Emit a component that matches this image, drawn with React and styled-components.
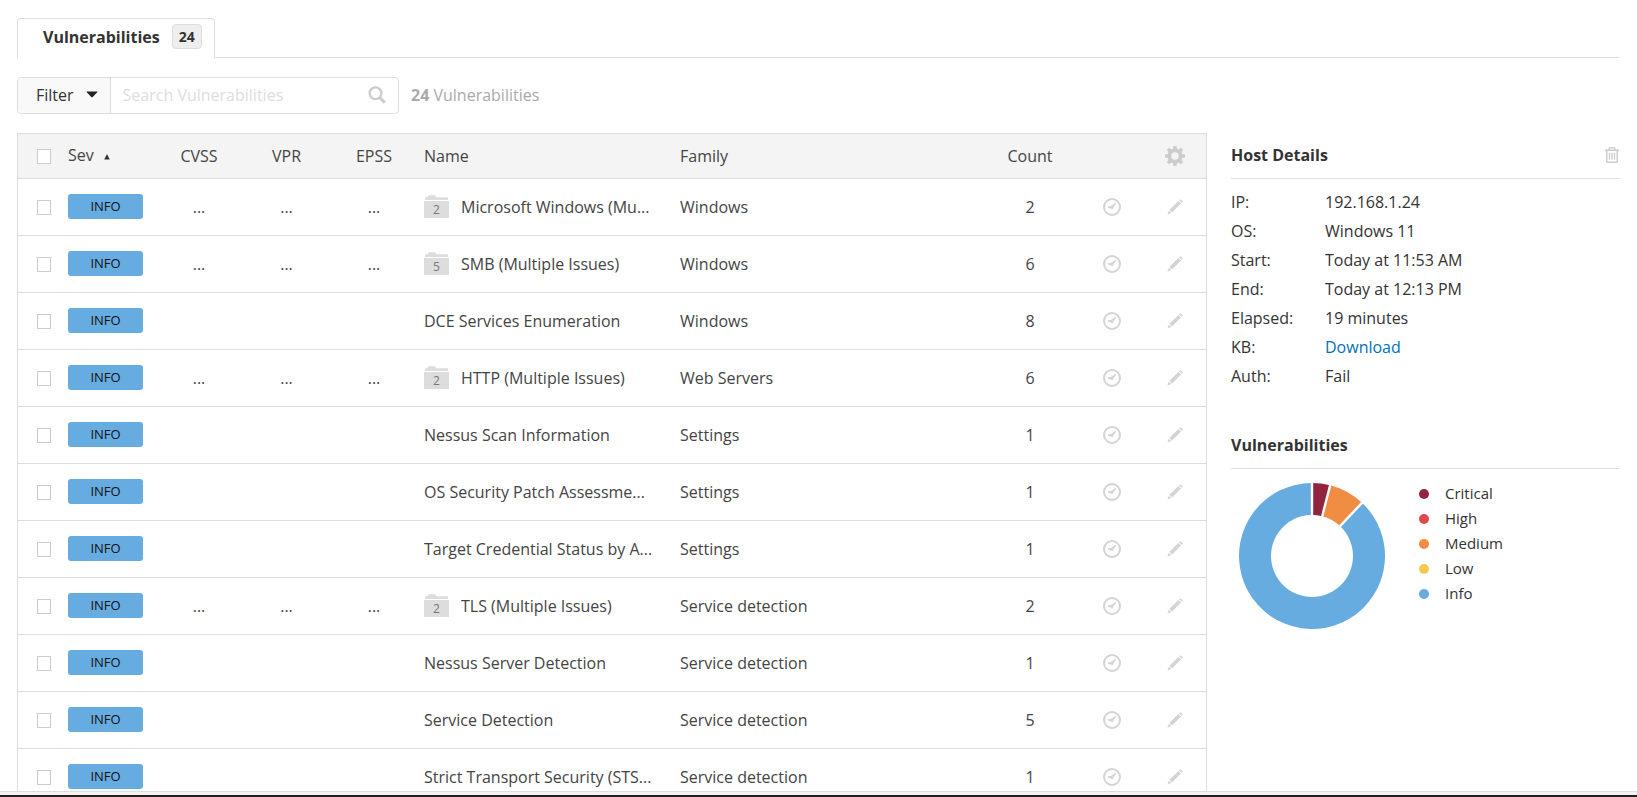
import React from "react";
import styled, { createGlobalStyle } from "styled-components";

const GlobalStyle = createGlobalStyle`
  * { box-sizing: border-box; }
  body {
    margin: 0;
    background: #fff;
    color: #333;
    font: 16px/24px "Open Sans", "Noto Sans", sans-serif;
  }
  button, input { font: inherit; color: inherit; }
`;

const Page = styled.div`
  display: flex;
  flex-direction: column;
  height: 100vh;
`;

const Content = styled.main`
  flex: 1;
  min-height: 0;
  overflow: hidden;
  padding: 18px 18px 0 17px;
`;

const Footer = styled.footer`
  flex: none;
  height: 6px;
  background: #f4f4f4;
  border-top: 1px solid #ddd;
  border-bottom: 2px solid #231f20;
`;

const Tabs = styled.nav`
  display: flex;
  border-bottom: 1px solid #ddd;
`;

const Tab = styled.a`
  display: flex;
  align-items: center;
  gap: 12px;
  height: 40px;
  margin-bottom: -1px;
  padding: 0 12px 4px 25px;
  border: 1px solid #ddd;
  border-bottom: 0;
  border-radius: 4px 4px 0 0;
  background: #fff;
  color: #333;
  font-weight: 700;
  text-decoration: none;
`;

const TabCount = styled.span`
  padding: 0 6px;
  border: 1px solid #ddd;
  border-radius: 4px;
  background: #eee;
  font-size: 14px;
  line-height: 23px;
`;

const Toolbar = styled.div`
  display: flex;
  align-items: center;
  gap: 12px;
  margin: 19px 0;
`;

const SearchGroup = styled.div`
  display: flex;
  align-items: center;
  width: 382px;
  height: 37px;
  border: 1px solid #ddd;
  border-radius: 4px;
  overflow: hidden;
`;

const FilterButton = styled.button`
  display: flex;
  align-items: center;
  gap: 12px;
  height: 100%;
  padding: 0 12px 2px 18px;
  border: 0;
  border-right: 1px solid #ddd;
  background: #f9f9f9;
`;

const SearchInput = styled.input`
  flex: 1;
  min-width: 0;
  height: 100%;
  padding: 0 12px 2px;
  border: 0;
  outline: 0;
  background: #fff;
  &::placeholder { color: #ddd; opacity: 1; }
`;

const IconButton = styled.button`
  display: flex;
  justify-content: center;
  align-items: center;
  padding: 0;
  border: 0;
  background: none;
  color: ${(p) => p.$tone || "#d4d4d4"};
`;

const SearchButton = styled(IconButton)`
  padding: 0 12px 2px 0;
`;

const RowAction = styled(IconButton)`
  width: 100%;
`;

const ResultCount = styled.p`
  margin: 0;
  padding-bottom: 2px;
  color: #aaa;
  strong { font-weight: 700; }
`;

const Columns = styled.div`
  display: flex;
  align-items: flex-start;
  gap: 24px;
`;

const TableFrame = styled.section`
  flex: 1;
  min-width: 0;
  border: 1px solid #ddd;
`;

const Table = styled.table`
  width: 100%;
  table-layout: fixed;
  border-spacing: 0;
  color: #444;
`;

const Col = styled.col`
  width: ${(p) => (p.$w ? `${p.$w}px` : "auto")};
`;

const Cell = styled.td`
  height: 57px;
  padding: 0 6px;
  border-bottom: 1px solid #ddd;
  text-align: ${(p) => p.$align || "left"};
  white-space: nowrap;
`;

const CheckCell = styled(Cell)`
  padding: 0 0 0 19px;
`;

const SeverityCell = styled(Cell)`
  padding-bottom: 2px;
`;

const NameCell = styled(Cell)`
  padding-right: 12px;
`;

const HeadRow = styled.tr`
  background: #f4f4f4;
  th {
    height: 45px;
    font-weight: 400;
  }
`;

const Checkbox = styled.input.attrs({ type: "checkbox" })`
  appearance: none;
  display: block;
  width: 14px;
  height: 15px;
  margin: 0;
  border: 1px solid #ccc;
  background: #fff;
`;

const SortButton = styled.button`
  display: flex;
  align-items: center;
  gap: 10px;
  padding: 0;
  border: 0;
  background: none;
`;

const Severity = styled.span`
  display: block;
  width: 75px;
  border-radius: 3px;
  background: #67ace1;
  color: #111;
  font-size: 13px;
  line-height: 25px;
  text-align: center;
`;

const NameLine = styled.div`
  display: flex;
  align-items: center;
  gap: 12px;
`;

const NameText = styled.span`
  min-width: 0;
  overflow: hidden;
  text-overflow: ellipsis;
`;

const Folder = styled.span`
  position: relative;
  flex: none;
  display: block;
  width: 25px;
  height: 24px;
  svg { display: block; }
`;

const FolderCount = styled.span`
  position: absolute;
  inset: 6px 0 0;
  color: #777;
  font-size: 12px;
  line-height: 18px;
  text-align: center;
`;

const Sidebar = styled.aside`
  flex: none;
  width: 388px;
`;

const PanelHead = styled.header`
  display: flex;
  justify-content: space-between;
  align-items: center;
  height: 46px;
  padding-bottom: 2px;
  border-bottom: 1px solid #ddd;
`;

const PanelTitle = styled.h2`
  margin: 0;
  font-size: 16px;
  line-height: 24px;
  font-weight: 700;
`;

const Details = styled.dl`
  display: grid;
  grid-template-columns: 94px 1fr;
  margin: 9px 0 32px;
  line-height: 29px;
  dd { margin: 0; }
`;

const Link = styled.a`
  color: #0071b9;
  text-decoration: none;
`;

const Chart = styled.div`
  display: flex;
  gap: 34px;
  padding: 12px 8px;
  svg { margin-top: 2px; }
`;

const Legend = styled.ul`
  margin: 0;
  padding: 0;
  list-style: none;
  font-size: 15px;
  line-height: 25px;
`;

const LegendItem = styled.li`
  display: flex;
  align-items: center;
  gap: 16px;
  &::before {
    content: "";
    width: 10px;
    height: 10px;
    border-radius: 50%;
    background: ${(p) => p.$color};
  }
`;

const SearchIcon = () => (
  <svg width="18" height="18" viewBox="0 0 18 18" fill="none" stroke="currentColor">
    <circle cx="7.5" cy="7.3" r="5.9" strokeWidth="2.3" />
    <path d="M11.8 11.6 16.8 16.6" strokeWidth="3" />
  </svg>
);

const CaretIcon = () => (
  <svg width="12" height="7" viewBox="0 0 12 7">
    <path d="M1 0.5H11Q11.8 0.6 11 1.5L6.7 6Q6 6.6 5.3 6L1 1.5Q.2.6 1 .5Z" fill="#222" />
  </svg>
);

const SortIcon = () => (
  <svg width="6" height="10" viewBox="0 0 6 10">
    <path d="M3 4 5.8 9.4H.2Z" fill="#333" />
  </svg>
);

const GearIcon = () => (
  <svg width="20" height="20" viewBox="0 0 20 20" fill="none" stroke="currentColor">
    <circle cx="10" cy="10" r="5.7" strokeWidth="3.8" />
    {[0, 45, 90, 135, 180, 225, 270, 315].map((a) => (
      <path
        key={a}
        d="M7.9 3.4 8.5 0H11.5L12.1 3.4Z"
        fill="currentColor"
        stroke="none"
        transform={`rotate(${a} 10 10)`}
      />
    ))}
  </svg>
);

const ClockIcon = () => (
  <svg width="18" height="18" viewBox="0 0 18 18" fill="none" stroke="currentColor">
    <circle cx="9" cy="9" r="8" strokeWidth="2" />
    <path d="M5 8.2 8 8 12.6 4.8 13.3 5.4 10.2 9.4V11L8.6 10.8 5 9.8Z" fill="currentColor" stroke="none" />
  </svg>
);

const PencilIcon = () => (
  <svg width="16" height="16" viewBox="0 0 16 16" fill="currentColor">
    <path d="M12.1 1.2 13 .4Q13.5 0 13.9 .4L15.5 2Q15.9 2.4 15.5 2.9L14.7 3.8Z" />
    <path d="M11.4 1.9 14 4.5 5.1 13.4 2.5 10.8Z" />
    <path d="M1.9 11.5 4.4 14 .4 15.6Z" />
  </svg>
);

const TrashIcon = () => (
  <svg width="14" height="16" viewBox="0 0 14 16" fill="none" stroke="currentColor">
    <path d="M0 3.2H14M4.2 3V1.7Q4.2.8 5 .8H9Q9.8.8 9.8 1.7V3" strokeWidth="1.5" />
    <path d="M1.7 3.5V14.3Q1.7 15.2 2.6 15.2H11.4Q12.3 15.2 12.3 14.3V3.5" strokeWidth="1.5" />
    <path d="M4.5 5.8V12.8M7 5.8V12.8M9.5 5.8V12.8" strokeWidth="1.3" />
  </svg>
);

const FolderIcon = () => (
  <svg width="25" height="24" viewBox="0 0 25 24" fill="#ddd">
    <path d="M1 5V3.2Q1 2.2 2 2.2H3.4L4.3.6Q4.6.2 5.2.2H10.4Q11 .2 11.3.6L12.2 2.2H23Q24 2.2 24 3.2V5Z" />
    <path d="M0 6H25V22.4Q25 23 24.4 23H.6Q0 23 0 22.4Z" />
  </svg>
);

const rows = [
  { name: "Microsoft Windows (Mu...", group: 2, family: "Windows", count: 2 },
  { name: "SMB (Multiple Issues)", group: 5, family: "Windows", count: 6 },
  { name: "DCE Services Enumeration", family: "Windows", count: 8 },
  { name: "HTTP (Multiple Issues)", group: 2, family: "Web Servers", count: 6 },
  { name: "Nessus Scan Information", family: "Settings", count: 1 },
  { name: "OS Security Patch Assessme...", family: "Settings", count: 1 },
  { name: "Target Credential Status by A...", family: "Settings", count: 1 },
  { name: "TLS (Multiple Issues)", group: 2, family: "Service detection", count: 2 },
  { name: "Nessus Server Detection", family: "Service detection", count: 1 },
  { name: "Service Detection", family: "Service detection", count: 5 },
  { name: "Strict Transport Security (STS...", family: "Service detection", count: 1 },
];

const details = [
  ["IP:", "192.168.1.24"],
  ["OS:", "Windows 11"],
  ["Start:", "Today at 11:53 AM"],
  ["End:", "Today at 12:13 PM"],
  ["Elapsed:", "19 minutes"],
  ["KB:", <Link href="#kb">Download</Link>],
  ["Auth:", "Fail"],
];

const severities = [
  { label: "Critical", color: "#91243e", share: 4 },
  { label: "High", color: "#dd4b50", share: 0 },
  { label: "Medium", color: "#f18c43", share: 8 },
  { label: "Low", color: "#f8c851", share: 0 },
  { label: "Info", color: "#67ace1", share: 88 },
];

function Donut() {
  const c = 73;
  const total = severities.reduce((n, s) => n + s.share, 0);
  const at = (r, turn) => {
    const a = turn * 2 * Math.PI;
    return `${c + r * Math.sin(a)} ${c - r * Math.cos(a)}`;
  };
  let sum = 0;
  const slices = severities
    .filter((s) => s.share)
    .map((s) => {
      const from = sum / total;
      sum += s.share;
      const to = sum / total;
      const big = to - from > 0.5 ? 1 : 0;
      return {
        ...s,
        from,
        d: `M${at(73, from)}A73 73 0 ${big} 1 ${at(73, to)}L${at(41, to)}A41 41 0 ${big} 0 ${at(41, from)}Z`,
      };
    });
  return (
    <svg width="146" height="146" viewBox="0 0 146 146" role="img" aria-label="Vulnerabilities by severity">
      {slices.map((s) => <path key={s.label} d={s.d} fill={s.color} />)}
      {slices.map((s) => (
        <path key={s.label} d={`M${at(40, s.from)}L${at(74, s.from)}`} stroke="#fff" strokeWidth="2.4" />
      ))}
    </svg>
  );
}

function VulnerabilityRow({ row }) {
  const dots = row.group ? "..." : "";
  return (
    <tr>
      <CheckCell><Checkbox aria-label={`Select ${row.name}`} /></CheckCell>
      <SeverityCell><Severity>INFO</Severity></SeverityCell>
      <Cell $align="center">{dots}</Cell>
      <Cell $align="center">{dots}</Cell>
      <Cell $align="center">{dots}</Cell>
      <NameCell>
        <NameLine>
          {row.group && (
            <Folder>
              <FolderIcon />
              <FolderCount>{row.group}</FolderCount>
            </Folder>
          )}
          <NameText>{row.name}</NameText>
        </NameLine>
      </NameCell>
      <Cell>{row.family}</Cell>
      <Cell $align="center">{row.count}</Cell>
      <Cell><RowAction aria-label="Snooze"><ClockIcon /></RowAction></Cell>
      <Cell><RowAction aria-label="Modify"><PencilIcon /></RowAction></Cell>
    </tr>
  );
}

export default function App() {
  return (
    <Page>
      <GlobalStyle />
      <Content>
        <Tabs>
          <Tab href="#vulnerabilities">
            Vulnerabilities <TabCount>24</TabCount>
          </Tab>
        </Tabs>
        <Toolbar>
          <SearchGroup>
            <FilterButton>Filter <CaretIcon /></FilterButton>
            <SearchInput placeholder="Search Vulnerabilities" aria-label="Search Vulnerabilities" />
            <SearchButton $tone="#ccc" aria-label="Search"><SearchIcon /></SearchButton>
          </SearchGroup>
          <ResultCount><strong>24</strong> Vulnerabilities</ResultCount>
        </Toolbar>
        <Columns>
          <TableFrame>
            <Table>
              <colgroup>
                <Col $w={44} />
                <Col $w={93} />
                <Col $w={88} />
                <Col $w={87} />
                <Col $w={88} />
                <Col $w={256} />
                <Col />
                <Col $w={102} />
                <Col $w={62} />
                <Col $w={63} />
              </colgroup>
              <thead>
                <HeadRow>
                  <CheckCell as="th"><Checkbox aria-label="Select all" /></CheckCell>
                  <SeverityCell as="th"><SortButton>Sev <SortIcon /></SortButton></SeverityCell>
                  <Cell as="th" $align="center">CVSS</Cell>
                  <Cell as="th" $align="center">VPR</Cell>
                  <Cell as="th" $align="center">EPSS</Cell>
                  <Cell as="th">Name</Cell>
                  <Cell as="th">Family</Cell>
                  <Cell as="th" $align="center">Count</Cell>
                  <Cell as="th" />
                  <Cell as="th">
                    <RowAction $tone="#ccc" aria-label="Table settings"><GearIcon /></RowAction>
                  </Cell>
                </HeadRow>
              </thead>
              <tbody>
                {rows.map((row) => <VulnerabilityRow key={row.name} row={row} />)}
              </tbody>
            </Table>
          </TableFrame>
          <Sidebar>
            <PanelHead>
              <PanelTitle>Host Details</PanelTitle>
              <IconButton $tone="#ccc" aria-label="Delete host"><TrashIcon /></IconButton>
            </PanelHead>
            <Details>
              {details.map(([term, value]) => (
                <React.Fragment key={term}>
                  <dt>{term}</dt>
                  <dd>{value}</dd>
                </React.Fragment>
              ))}
            </Details>
            <PanelHead>
              <PanelTitle>Vulnerabilities</PanelTitle>
            </PanelHead>
            <Chart>
              <Donut />
              <Legend>
                {severities.map((s) => (
                  <LegendItem key={s.label} $color={s.color}>{s.label}</LegendItem>
                ))}
              </Legend>
            </Chart>
          </Sidebar>
        </Columns>
      </Content>
      <Footer />
    </Page>
  );
}
